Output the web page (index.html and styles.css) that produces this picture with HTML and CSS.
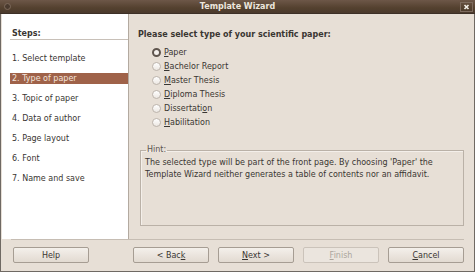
FILE: index.html
```html
<!DOCTYPE html>
<html lang="en">
<head>
    <meta charset="UTF-8">
    <title>Template Wizard</title>
    <link rel="stylesheet" href="styles.css">
</head>
<body>
    <div class="window">
        <div class="titlebar">
            <span class="menu-dot"></span>
            <span class="title">Template Wizard</span>
            <span class="close">
                <svg width="13" height="10" viewBox="0 0 13 10">
                    <rect x="0.5" y="0.5" width="12" height="9" fill="none" stroke="#7d6b5e"/>
                    <path d="M4.5 3 L8.5 7 M8.5 3 L4.5 7" stroke="#f4f0ea" stroke-width="1.6"/>
                </svg>
            </span>
        </div>

        <div class="content">
            <div class="steps">
                <div class="steps-head">Steps:</div>
                <ul class="step-list">
                    <li>1. Select template</li>
                    <li class="active">2. Type of paper</li>
                    <li>3. Topic of paper</li>
                    <li>4. Data of author</li>
                    <li>5. Page layout</li>
                    <li>6. Font</li>
                    <li>7. Name and save</li>
                </ul>
            </div>

            <div class="main">
                <div class="question">Please select type of your scientific paper:</div>
                <div class="options">
                    <label class="option"><span class="radio checked"></span><span><u>P</u>aper</span></label>
                    <label class="option"><span class="radio"></span><span><u>B</u>achelor Report</span></label>
                    <label class="option"><span class="radio"></span><span><u>M</u>aster Thesis</span></label>
                    <label class="option"><span class="radio"></span><span><u>D</u>iploma Thesis</span></label>
                    <label class="option"><span class="radio"></span><span>Dissertati<u>o</u>n</span></label>
                    <label class="option"><span class="radio"></span><span><u>H</u>abilitation</span></label>
                </div>

                <fieldset class="hint">
                    <legend>Hint:</legend>
                    <p>The selected type will be part of the front page. By choosing 'Paper' the Template Wizard neither generates a table of contents nor an affidavit.</p>
                </fieldset>
            </div>
        </div>

        <div class="footer">
            <button class="btn help">Help</button>
            <div class="nav">
                <button class="btn">&lt; Bac<u>k</u></button>
                <button class="btn"><u>N</u>ext &gt;</button>
                <button class="btn disabled"><u>F</u>inish</button>
                <button class="btn"><u>C</u>ancel</button>
            </div>
        </div>
    </div>
</body>
</html>
```

FILE: styles.css
```css
body {
    margin: 0;
    font-family: "DejaVu Sans", sans-serif;
    font-size: 8px;
    color: #3a3632;
}
.window {
    width: 475px;
    height: 272px;
    box-sizing: border-box;
    background-color: #e7dfd6;
    border: 1px solid #6f6963;
    border-top: none;
    display: flex;
    flex-direction: column;
}
.titlebar {
    height: 14px;
    margin: 0 -1px;
    background: linear-gradient(#6d5748, #54412f 60%, #4b3a2d);
    border-bottom: 1px solid #3d3027;
    box-sizing: border-box;
    display: grid;
    grid-template-columns: 1fr auto 1fr;
    align-items: center;
}
.menu-dot {
    width: 5px;
    height: 5px;
    margin-left: 4px;
    border-radius: 50%;
    background-color: #4a3a2e;
    border: 1px solid #7e6b5c;
}
.title {
    color: #ece6dd;
    font-weight: bold;
    line-height: 13px;
}
.close {
    justify-self: end;
    margin-right: 2px;
    height: 10px;
}
.content {
    flex: 1;
    display: flex;
    min-height: 0;
}
.steps {
    width: 126px;
    margin-left: 1px;
    background-color: #ffffff;
    border-right: 1px solid #b3aaa0;
    padding-top: 15px;
}
.steps-head {
    margin-left: 8px;
    padding-left: 2px;
    line-height: 10px;
    font-weight: bold;
    border-bottom: 1px solid #c8c0b8;
}
.step-list {
    list-style: none;
    margin: 13px 0 0 8px;
    padding: 0;
}
.step-list li {
    line-height: 11px;
    padding-left: 2px;
    margin-bottom: 9px;
}
.step-list li.active {
    background-color: #9f6249;
    color: #f3e4db;
}
.main {
    flex: 1;
    padding: 16px 10px 0 9px;
}
.question {
    font-weight: bold;
    line-height: 10px;
}
.options {
    margin: 5px 0 0 14px;
    display: flex;
    flex-direction: column;
}
.option {
    display: flex;
    align-items: center;
    gap: 3px;
    height: 14px;
}
.radio {
    width: 9px;
    height: 9px;
    box-sizing: border-box;
    border-radius: 50%;
    border: 1px solid #bdb5ad;
    background: linear-gradient(#ffffff, #ece7e2);
}
.radio.checked {
    border: 2.5px solid #5f554e;
    background: #f5f1ed;
}
.hint {
    margin: 16px 0 0 2px;
    padding: 2px 4px 0 4px;
    border: 1px solid #bab1a7;
    box-shadow: inset 1px 1px 0 #f4efea;
}
.hint legend {
    padding: 0 1px;
    margin-left: 1px;
    line-height: 10px;
    color: #5b5550;
}
.hint p {
    margin: 0;
    line-height: 12px;
    height: 68px;
}
.footer {
    margin: 0 10px;
    border-top: 1px solid #c6bdb3;
    height: 32px;
    box-sizing: border-box;
    padding-top: 7px;
    display: flex;
    justify-content: space-between;
}
.nav {
    display: flex;
    gap: 9px;
}
.btn {
    width: 76px;
    height: 16px;
    padding: 0;
    font-family: "DejaVu Sans", sans-serif;
    font-size: 8px;
    color: #3a3632;
    background: linear-gradient(#f4f0eb, #e2dad1);
    border: 1px solid #a69d93;
    border-radius: 2px;
}
.btn.help {
    margin-left: 2px;
}
.btn.disabled {
    color: #aca59d;
    border-color: #cbc3ba;
    background: #ebe5de;
}
```
